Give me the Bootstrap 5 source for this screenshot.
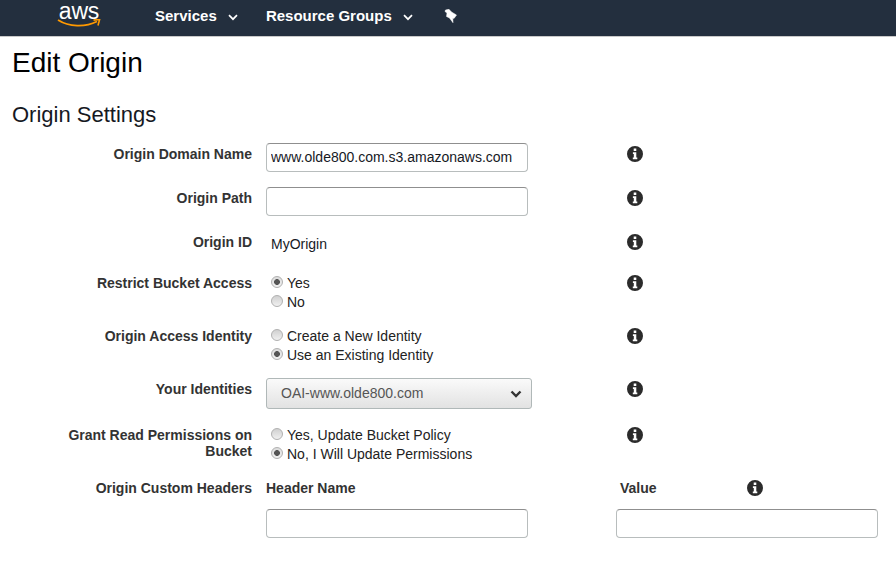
<!DOCTYPE html>
<html lang="en">
<head>
  <meta charset="UTF-8">
  <title>Edit Origin</title>
  <link href="https://cdn.jsdelivr.net/npm/bootstrap@5.3.3/dist/css/bootstrap.min.css" rel="stylesheet">
  <style>
    body {
      font-family: "Liberation Sans", Arial, sans-serif;
      font-size: 14px;
      color: #16191f;
      background: #fff;
    }

    .top-bar {
      background: #232f3e;
      height: 37px;
      border-bottom: 1px solid #c9c9c9;
      padding: 0 0 0 57px;
      flex-wrap: nowrap;
    }
    .aws-logo { width: 44px; height: 28px; align-self: flex-start; margin-top: 1px; }
    .aws-word {
      display: block;
      height: 20px;
      font-size: 23px;
      line-height: 20px;
      color: #fff;
      text-align: center;
      letter-spacing: -0.2px;
    }
    .aws-smile { display: block; width: 44px; height: 9px; margin-top: -2px; }
    .top-link {
      color: #fff;
      font-weight: 700;
      font-size: 15px;
      line-height: 17px;
      text-decoration: none;
      white-space: nowrap;
      margin-top: -5px;
    }
    .top-link svg { margin-left: 7px; }
    .link-services { margin-left: 54px; }
    .link-groups { margin-left: 28px; }
    .pin-icon { margin: -5px 0 0 31px; }

    .page-title {
      font-size: 28px;
      font-weight: 400;
      line-height: 32px;
      margin: 10px 0 0 12px;
      color: #000;
    }
    .section-title {
      font-size: 22px;
      font-weight: 400;
      line-height: 26px;
      margin: 23px 0 15px 12px;
      color: #16191f;
    }

    .field-row { margin-bottom: 15px; }
    .field-label {
      width: 252px;
      flex: none;
      text-align: right;
      font-weight: 700;
      font-size: 14px;
      line-height: 16px;
      color: #333;
      padding: 3px 0 0 40px;
    }
    .field-value { width: 350px; flex: none; margin-left: 14px; }
    .info-icon { margin: 3px 0 0 11px; flex: none; display: block; }

    .text-box {
      width: 262px;
      height: 29px;
      padding: 0 4px 1px;
      font-size: 14px;
      color: #16191f;
      border: 1px solid #b8bdbd;
      border-top-color: #8f8f8f;
      border-radius: 4px;
      box-shadow: none;
    }
    .plain-value { padding: 4px 0 0 5px; line-height: 19px; height: 26px; }

    .radio-stack { padding: 2px 0 0 5px; height: 38px; }
    .radio-line {
      min-height: 0;
      height: 19px;
      line-height: 19px;
      margin: 0;
      padding: 0;
      display: flex;
      align-items: center;
    }
    .radio-line .form-check-input {
      width: 12px;
      height: 12px;
      margin: -4px 4px 0 0;
      float: none;
      border: 1px solid #b0b0b0;
      background: linear-gradient(#d0d0d0, #f0f0f0);
      flex: none;
    }
    .radio-line .form-check-input:checked {
      background: radial-gradient(circle, #555 0 2.6px, transparent 3.2px), linear-gradient(#dcdcdc, #f0f0f0);
      border-color: #b0b0b0;
    }
    .radio-line .form-check-label { color: #222; }

    .identity-select {
      width: 266px;
      height: 31px;
      padding: 0 14px;
      font-size: 14px;
      color: #555;
      border: 1px solid #b0b8b8;
      border-radius: 3px;
      background-color: #eee;
      background-image:
        url("data:image/svg+xml,%3Csvg xmlns='http://www.w3.org/2000/svg' viewBox='0 0 12 8'%3E%3Cpath d='M1.5 1.5 6 6l4.5-4.5' fill='none' stroke='%23333' stroke-width='2.4'/%3E%3C/svg%3E"),
        linear-gradient(#fafafa, #e2e2e2);
      background-repeat: no-repeat, no-repeat;
      background-position: right 9px center, 0 0;
      background-size: 12px 8px, 100% 100%;
    }

    .header-label { font-weight: 700; font-size: 14px; line-height: 16px; color: #333; padding-top: 3px; }
    .value-head { width: 131px; flex: none; padding-left: 4px; }
    .name-head { width: 350px; flex: none; margin-left: 14px; }
    .headers-title { margin-bottom: 13px; }
    .header-inputs { padding-left: 266px; }
    .header-inputs .text-box + .text-box { margin-left: 88px; }
    .head-info { margin-left: 0; }
  </style>
</head>
<body>

<svg width="0" height="0" class="d-block">
  <symbol id="info" viewBox="0 0 16 16">
    <path fill="#2b2b2b" fill-rule="evenodd" d="M8 0a8 8 0 1 0 0 16A8 8 0 0 0 8 0ZM6.700 2.600h2.600v2.300H6.700ZM5.900 6.200h3.400v5.200h1v1.900H5.800v-1.900h1V8.100h-.9Z"/>
  </symbol>
</svg>

<nav class="navbar top-bar align-items-center justify-content-start">
  <div class="aws-logo">
    <span class="aws-word">aws</span>
    <svg class="aws-smile" viewBox="0 0 44 9">
      <path d="M1 1C12 8 28 8.500 40 2.500" fill="none" stroke="#f90" stroke-width="1.800"/>
      <path d="M36.500 1.100 42.600.5l-1.600 6" fill="none" stroke="#f90" stroke-width="1.600"/>
    </svg>
  </div>
  <a class="top-link link-services" href="#">Services
    <svg width="10" height="7" viewBox="0 0 10 7"><path d="M1 1.200 5 5.200l4-4" fill="none" stroke="#fff" stroke-width="1.700"/></svg>
  </a>
  <a class="top-link link-groups" href="#">Resource Groups
    <svg width="10" height="7" viewBox="0 0 10 7"><path d="M1 1.200 5 5.200l4-4" fill="none" stroke="#fff" stroke-width="1.700"/></svg>
  </a>
  <svg class="pin-icon" width="13" height="14" viewBox="0 0 13 14">
    <path fill="#fff" stroke="#fff" stroke-width=".5" stroke-linejoin="round" d="M1.500 1 5 .3l2.500 2.700 5 3L10 9.500l-1.200-.5.200 4.700L5.500 9l-3-1.500.5-3.500-2-1.500Z"/>
  </svg>
</nav>

<h1 class="page-title">Edit Origin</h1>
<h2 class="section-title">Origin Settings</h2>

<form>
  <div class="d-flex field-row">
    <div class="field-label">Origin Domain Name</div>
    <div class="field-value"><input class="form-control text-box" type="text" value="www.olde800.com.s3.amazonaws.com"></div>
    <svg class="info-icon" width="16" height="16"><use href="#info"/></svg>
  </div>
  <div class="d-flex field-row">
    <div class="field-label">Origin Path</div>
    <div class="field-value"><input class="form-control text-box" type="text"></div>
    <svg class="info-icon" width="16" height="16"><use href="#info"/></svg>
  </div>
  <div class="d-flex field-row">
    <div class="field-label">Origin ID</div>
    <div class="field-value plain-value">MyOrigin</div>
    <svg class="info-icon" width="16" height="16"><use href="#info"/></svg>
  </div>
  <div class="d-flex field-row">
    <div class="field-label">Restrict Bucket Access</div>
    <div class="field-value radio-stack">
      <div class="form-check radio-line"><input class="form-check-input" type="radio" name="restrict" id="r1" checked><label class="form-check-label" for="r1">Yes</label></div>
      <div class="form-check radio-line"><input class="form-check-input" type="radio" name="restrict" id="r2"><label class="form-check-label" for="r2">No</label></div>
    </div>
    <svg class="info-icon" width="16" height="16"><use href="#info"/></svg>
  </div>
  <div class="d-flex field-row">
    <div class="field-label">Origin Access Identity</div>
    <div class="field-value radio-stack">
      <div class="form-check radio-line"><input class="form-check-input" type="radio" name="identity" id="i1"><label class="form-check-label" for="i1">Create a New Identity</label></div>
      <div class="form-check radio-line"><input class="form-check-input" type="radio" name="identity" id="i2" checked><label class="form-check-label" for="i2">Use an Existing Identity</label></div>
    </div>
    <svg class="info-icon" width="16" height="16"><use href="#info"/></svg>
  </div>
  <div class="d-flex field-row">
    <div class="field-label">Your Identities</div>
    <div class="field-value">
      <select class="form-select identity-select"><option>OAI-www.olde800.com</option></select>
    </div>
    <svg class="info-icon" width="16" height="16"><use href="#info"/></svg>
  </div>
  <div class="d-flex field-row">
    <div class="field-label">Grant Read Permissions on Bucket</div>
    <div class="field-value radio-stack">
      <div class="form-check radio-line"><input class="form-check-input" type="radio" name="grant" id="g1"><label class="form-check-label" for="g1">Yes, Update Bucket Policy</label></div>
      <div class="form-check radio-line"><input class="form-check-input" type="radio" name="grant" id="g2" checked><label class="form-check-label" for="g2">No, I Will Update Permissions</label></div>
    </div>
    <svg class="info-icon" width="16" height="16"><use href="#info"/></svg>
  </div>
  <div class="d-flex headers-title">
    <div class="field-label">Origin Custom Headers</div>
    <div class="name-head header-label">Header Name</div>
    <div class="value-head header-label">Value</div>
    <svg class="info-icon head-info" width="16" height="16"><use href="#info"/></svg>
  </div>
  <div class="d-flex header-inputs">
    <input class="form-control text-box" type="text">
    <input class="form-control text-box" type="text">
  </div>
</form>

<script src="https://cdn.jsdelivr.net/npm/bootstrap@5.3.3/dist/js/bootstrap.bundle.min.js"></script>
</body>
</html>
